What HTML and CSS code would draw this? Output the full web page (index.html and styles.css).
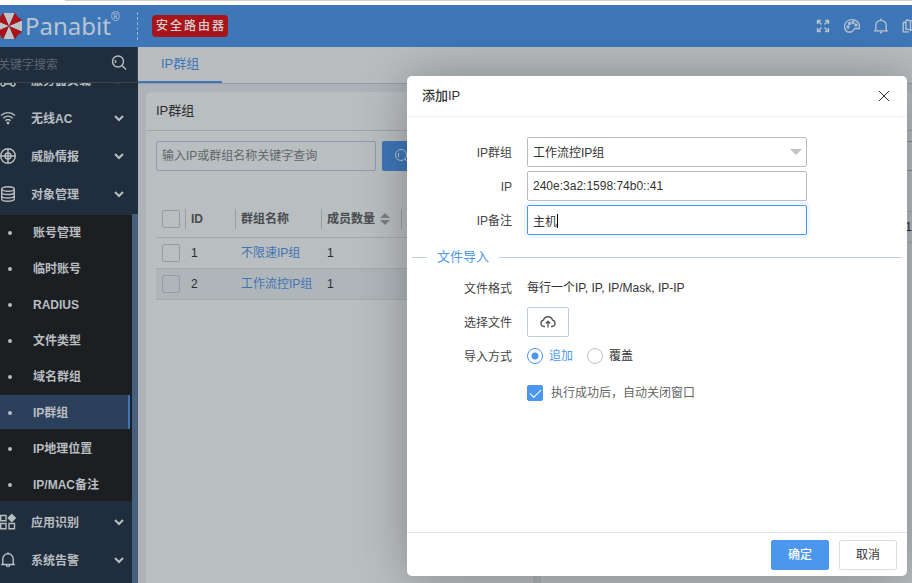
FILE: index.html
```html
<!DOCTYPE html>
<html lang="zh-CN">

<head>
    <meta charset="UTF-8">
    <meta name="viewport" content="width=device-width, initial-scale=1.0">
    <title>Panabit</title>
    <link rel="stylesheet" href="styles.css">
</head>

<body>
    <div class="app">
        <div class="strip"></div>

        <header class="topbar">
            <div class="brand">
                <svg class="brand-mark" viewBox="0 0 28 28">
                    <path fill="#bfc3c8" d="M14 14 8.200 1h11.600zM14 14 27 8.200v11.600zM14 14 8.200 27h11.600zM14 14 1 8.200v11.600z" />
                    <path fill="#a9141a" d="M14 14 19.800.5 23 5l4.500 3.200zM14 14 27.500 19.800 23 23l-3.200 4.500zM14 14 8.200 27.500 5 23 .5 19.800zM14 14 .5 8.200 5 5 8.200.5z" />
                </svg>
                <span class="brand-name">Panabit</span>
                <sup class="brand-reg">®</sup>
            </div>
            <span class="badge">安全路由器</span>
            <div class="tools">
                <button type="button" aria-label="全屏">
                    <svg viewBox="0 0 16 16"><path d="M2.500 6V2.500H6M2.500 2.500l4 4M10 2.500h3.500V6M13.500 2.500l-4 4M2.500 10v3.500H6M2.500 13.500l4-4M13.500 10v3.500H10M13.500 13.500l-4-4" /></svg>
                </button>
                <button type="button" aria-label="主题">
                    <svg viewBox="0 0 16 16"><path d="M3.500 14C.8 12.500.3 9.500.6 7.500 1.200 4 4.300 1.600 8 1.600c4.200 0 7.400 3 7.400 6.400v2.500h-4c-2.600 0-1.600 3.500-4.200 3.500z" /><circle cx="4" cy="9" r="1" /><circle cx="5.500" cy="5.500" r="1" /><circle cx="9" cy="4.500" r="1" /><circle cx="12" cy="7" r="1" /></svg>
                </button>
                <button type="button" aria-label="通知">
                    <svg viewBox="0 0 16 16"><path d="M.8 12.800h14.400M2.800 12.500V7.500a5.200 5.200 0 0 1 10.400 0v5M8 .5v1.800M6.800 14.500h2.400" /></svg>
                </button>
                <button type="button" aria-label="文档">
                    <svg viewBox="0 0 16 16"><path d="M4 11.500V2.500C5.500 1.500 7 2 8.500 3.500 10 2 12 1.500 14 2.500v9c-2-.8-4-.3-5.500 1-1.500-1.300-3-1.800-4.500-1zM8.500 3.500v9M4 4.500H1.200v9.300H7" /></svg>
                </button>
            </div>
        </header>

        <div class="layout">
            <aside class="sidebar">
                <div class="side-search">
                    <input type="text" placeholder="关键字搜索" aria-label="关键字搜索">
                    <button type="button" aria-label="搜索">
                        <svg viewBox="0 0 16 16"><circle cx="7" cy="6.500" r="5.500" /><path d="M4.500 8V5M11 10.500l4 4" /></svg>
                    </button>
                </div>
                <div class="side-scroll">
                    <ul class="menu">
                        <li>
                            <a class="menu-item" href="#">
                                <svg class="icon" viewBox="0 0 16 16"><path d="M8 3v4M3 10V7h10v3M5 12h6" /><circle cx="3" cy="12" r="2" /><circle cx="13" cy="12" r="2" /></svg>
                                <span>服务器负载</span>
                                <svg class="arrow" viewBox="0 0 10 10"><path d="M1 3l4 4 4-4" /></svg>
                            </a>
                        </li>
                        <li>
                            <a class="menu-item" href="#">
                                <svg class="icon" viewBox="0 0 16 16"><path d="M1 5.500c4-3.800 10-3.800 14 0M3.200 8.200c2.800-2.600 6.800-2.600 9.600 0M5.400 10.700c1.600-1.400 3.600-1.400 5.200 0" /><circle cx="8" cy="13" r=".7" /></svg>
                                <span>无线AC</span>
                                <svg class="arrow" viewBox="0 0 10 10"><path d="M1 3l4 4 4-4" /></svg>
                            </a>
                        </li>
                        <li>
                            <a class="menu-item" href="#">
                                <svg class="icon" viewBox="0 0 16 16"><circle cx="8" cy="8" r="7.300" /><circle cx="8" cy="8" r="3" /><path d="M8 1v14M1 8h14" /></svg>
                                <span>威胁情报</span>
                                <svg class="arrow" viewBox="0 0 10 10"><path d="M1 3l4 4 4-4" /></svg>
                            </a>
                        </li>
                        <li>
                            <a class="menu-item" href="#">
                                <svg class="icon" viewBox="0 0 16 16"><ellipse cx="8" cy="3" rx="6.300" ry="2.300" /><path d="M1.700 3v10c0 3 12.600 3 12.600 0V3M1.700 6.300c0 3 12.600 3 12.600 0M1.700 9.700c0 3 12.600 3 12.600 0" /></svg>
                                <span>对象管理</span>
                                <svg class="arrow" viewBox="0 0 10 10"><path d="M1 3l4 4 4-4" /></svg>
                            </a>
                            <ul class="submenu">
                                <li><a href="#">账号管理</a></li>
                                <li><a href="#">临时账号</a></li>
                                <li><a href="#">RADIUS</a></li>
                                <li><a href="#">文件类型</a></li>
                                <li><a href="#">域名群组</a></li>
                                <li><a class="active" href="#">IP群组</a></li>
                                <li><a href="#">IP地理位置</a></li>
                                <li><a href="#">IP/MAC备注</a></li>
                            </ul>
                        </li>
                        <li>
                            <a class="menu-item" href="#">
                                <svg class="icon" viewBox="0 0 16 16"><path d="M.7 1.500H6v5.200H.7zM.7 9.500H6v5.200H.7zM9 9.500h5.500v5.200H9z" /><path class="solid" d="M11.800.5 15.300 4l-3.500 3.500L8.300 4z" /></svg>
                                <span>应用识别</span>
                                <svg class="arrow" viewBox="0 0 10 10"><path d="M1 3l4 4 4-4" /></svg>
                            </a>
                        </li>
                        <li>
                            <a class="menu-item" href="#">
                                <svg class="icon" viewBox="0 0 16 16"><path d="M1 12.500h14M2.800 12.500V7a5.200 5.200 0 0 1 10.400 0v5.500M8 .3v1.500M6 13c.3 2 3.700 2 4 0" /></svg>
                                <span>系统告警</span>
                                <svg class="arrow" viewBox="0 0 10 10"><path d="M1 3l4 4 4-4" /></svg>
                            </a>
                        </li>
                    </ul>
                    <div class="side-track"></div>
                </div>
            </aside>

            <main class="main">
                <nav class="tabs">
                    <a class="tab active" href="#">IP群组</a>
                </nav>
                <div class="cards">
                    <section class="card">
                        <h2 class="card-title">IP群组</h2>
                        <div class="card-body">
                            <div class="filter">
                                <input type="text" placeholder="输入IP或群组名称关键字查询" aria-label="查询">
                                <button type="button" aria-label="查询">
                                    <svg viewBox="0 0 16 16"><circle cx="7" cy="7" r="5.500" /><path d="M4.500 9V5M11 11l4 4" /></svg>
                                </button>
                            </div>
                            <table class="grid">
                                <thead>
                                    <tr>
                                        <th class="col-check"><div class="th-cell"><input type="checkbox" aria-label="全选"></div></th>
                                        <th class="col-id"><div class="th-cell">ID</div></th>
                                        <th class="col-name"><div class="th-cell">群组名称</div></th>
                                        <th class="col-count">
                                            <div class="th-cell">成员数量
                                                <svg class="sort" viewBox="0 0 10 12"><path d="M5 0l5 5H0zM5 12 0 7h10z" /></svg>
                                            </div>
                                        </th>
                                        <th></th>
                                    </tr>
                                </thead>
                                <tbody>
                                    <tr>
                                        <td><input type="checkbox" aria-label="选择 1"></td>
                                        <td>1</td>
                                        <td><a href="#">不限速IP组</a></td>
                                        <td>1</td>
                                        <td></td>
                                    </tr>
                                    <tr class="current">
                                        <td><input type="checkbox" aria-label="选择 2"></td>
                                        <td>2</td>
                                        <td><a href="#">工作流控IP组</a></td>
                                        <td>1</td>
                                        <td></td>
                                    </tr>
                                </tbody>
                            </table>
                        </div>
                    </section>
                    <section class="card">
                        <h2 class="card-title"></h2>
                        <div class="detail-bar"></div>
                        <div class="detail-row">1</div>
                    </section>
                </div>
            </main>
        </div>
    </div>

    <div class="modal" role="dialog" aria-labelledby="modal-title">
        <div class="modal-head">
            <h3 id="modal-title">添加IP</h3>
            <button type="button" class="close" aria-label="关闭">
                <svg viewBox="0 0 12 12"><path d="M1 1l10 10M11 1 1 11" /></svg>
            </button>
        </div>
        <form class="modal-body">
            <div class="row">
                <label class="label" for="group">IP群组</label>
                <div class="field select">
                    <select id="group">
                        <option>工作流控IP组</option>
                    </select>
                </div>
            </div>
            <div class="row">
                <label class="label" for="ip">IP</label>
                <div class="field"><input type="text" id="ip" value="240e:3a2:1598:74b0::41"></div>
            </div>
            <div class="row">
                <label class="label" for="note">IP备注</label>
                <div class="field editing"><input type="text" id="note" value="主机"></div>
            </div>
            <h4 class="divider">文件导入</h4>
            <div class="row">
                <span class="label">文件格式</span>
                <span class="value">每行一个IP, IP, IP/Mask, IP-IP</span>
            </div>
            <div class="row">
                <label class="label" for="upload">选择文件</label>
                <button type="button" class="upload" id="upload">
                    <svg viewBox="0 0 16 16"><path d="M5 12.500H3.800a3.200 3.200 0 0 1-.4-6.300 4.800 4.800 0 0 1 9.200 0 3.200 3.200 0 0 1-.4 6.300H11M8 13.500V7.500M5.700 9.500 8 7.200l2.300 2.300" /></svg>
                </button>
            </div>
            <div class="row">
                <span class="label">导入方式</span>
                <label class="radio"><input type="radio" name="mode" checked><span>追加</span></label>
                <label class="radio"><input type="radio" name="mode"><span>覆盖</span></label>
            </div>
            <div class="row auto-close">
                <span class="label"></span>
                <label class="check"><input type="checkbox" checked><span>执行成功后，自动关闭窗口</span></label>
            </div>
        </form>
        <div class="modal-foot">
            <button type="button" class="btn primary">确定</button>
            <button type="button" class="btn">取消</button>
        </div>
    </div>
</body>

</html>
```
FILE: styles.css
```css
* {
    box-sizing: border-box;
}

body {
    margin: 0;
    font: 12px/18px "Liberation Sans", "Noto Sans CJK SC", sans-serif;
    color: #2a2d30;
    overflow: hidden;
}

ul {
    list-style: none;
    margin: 0;
    padding: 0;
}

a {
    color: inherit;
    text-decoration: none;
}

h2,
h3,
h4 {
    margin: 0;
    font-weight: normal;
}

button,
input,
select {
    font: inherit;
    color: inherit;
    margin: 0;
}

button {
    padding: 0;
    border: none;
    background: none;
    cursor: pointer;
}

svg {
    display: block;
    fill: none;
    stroke: currentColor;
}

.app {
    display: flex;
    flex-direction: column;
    height: 100vh;
    overflow: hidden;
}

.strip {
    flex: none;
    height: 5px;
    margin-left: 65px;
    border-top: 1px solid #cfcfcf;
}

/* top bar */
.topbar {
    flex: none;
    display: flex;
    align-items: center;
    height: 42px;
    background: #3e77b8;
    color: #b9c4d0;
    overflow: hidden;
}

.brand {
    display: flex;
    align-items: center;
    width: 138px;
    height: 28px;
    border-right: 1px dashed #9db4cf;
}

.brand-mark {
    flex: none;
    width: 28px;
    height: 28px;
    margin-left: -5px;
    stroke: none;
}

.brand-name {
    margin-left: 2px;
    font: 24px/28px "Noto Sans", "Open Sans", sans-serif;
}

.brand-reg {
    align-self: flex-start;
    font-size: 12px;
    line-height: 10px;
}

.badge {
    margin-left: 14px;
    padding: 2px 2px 2px 4px;
    border-radius: 4px;
    background: #a9141a;
    color: #d5cfcf;
    font-weight: 500;
    letter-spacing: 2px;
}

.tools {
    display: flex;
    gap: 13px;
    margin-left: auto;
    margin-right: -6px;
}

.tools svg {
    width: 16px;
    height: 16px;
    stroke-width: 1.3;
}

.layout {
    flex: 1;
    display: flex;
    min-height: 0;
}

/* sidebar */
.sidebar {
    flex: none;
    display: flex;
    flex-direction: column;
    width: 138px;
    background: #1f2d3d;
    color: #b9bdc1;
}

.side-search {
    flex: none;
    display: flex;
    align-items: center;
    height: 36px;
    padding-right: 10px;
    border-right: 1px solid #3a424b;
    border-bottom: 1px solid #3a424b;
}

.side-search input {
    flex: 1;
    min-width: 0;
    margin-left: -2px;
    padding: 0;
    border: none;
    outline: none;
    background: none;
}

.side-search input::placeholder {
    color: #5c6670;
}

.side-search svg {
    width: 16px;
    height: 16px;
    margin-bottom: 4px;
    stroke-width: 1.4;
}

.side-scroll {
    flex: 1;
    display: flex;
    min-height: 0;
    overflow: hidden;
}

/* list is scrolled down by part of one item */
.menu {
    flex: 1;
    margin-top: -22px;
    font-weight: bold;
}

.menu-item {
    display: flex;
    align-items: center;
    height: 38px;
    padding-right: 8px;
}

.menu-item span {
    padding-top: 2px;
}

.menu-item .icon {
    width: 16px;
    height: 16px;
    margin-right: 15px;
    stroke-width: 1.4;
}

.menu-item .arrow {
    width: 10px;
    height: 10px;
    margin-left: auto;
    stroke-width: 2;
}

.icon .solid {
    fill: currentColor;
}

.submenu {
    display: flex;
    flex-direction: column;
    gap: 2px;
    margin: 2px 0;
    background: #1b1f22;
}

.submenu a {
    display: flex;
    align-items: center;
    height: 34px;
    margin-right: 2px;
    padding: 2px 0 0 8px;
}

.submenu a::before {
    content: "";
    width: 4px;
    height: 4px;
    margin-right: 21px;
    border-radius: 2px;
    background: #b9bdc1;
}

.submenu a.active {
    background: #2b405b;
    border-right: 2px solid #3e77b8;
}

.side-track {
    width: 6px;
    margin-top: 131px;
    background: #465f7c;
}

/* main area */
.main {
    flex: 1;
    display: flex;
    flex-direction: column;
    min-width: 0;
    background: #adb3b8;
}

.tabs {
    flex: none;
    display: flex;
    height: 37px;
    background: #b9bdbf;
    border-bottom: 1px solid #929da8;
}

.tab {
    padding: 8px 23px;
    font-size: 13px;
    color: #3e77b8;
}

.tab.active {
    border-bottom: 2px solid #3e77b8;
}

.cards {
    flex: 1;
    display: grid;
    grid-template-columns: 51fr 49fr;
    gap: 8px;
    padding: 8px 0 0 8px;
}

.card {
    min-width: 0;
    border-radius: 5px 5px 0 0;
    background: #b9bec0;
    overflow: hidden;
}

.card-title {
    height: 39px;
    padding: 10px;
    font-size: 13px;
    border-bottom: 1px solid #9fa5a9;
}

.card-body {
    padding: 10px;
}

.filter {
    display: flex;
    gap: 6px;
    margin-bottom: 30px;
}

.filter input {
    width: 220px;
    height: 30px;
    padding: 0 5px;
    border: 1px solid #8c9cb2;
    border-radius: 2px;
    background: none;
}

.filter input::placeholder {
    color: #626669;
}

.filter button {
    width: 60px;
    height: 30px;
    padding-left: 12px;
    border-radius: 2px;
    background: #3e77b8;
    color: #b9c4d0;
}

.filter svg {
    width: 16px;
    height: 16px;
}

.grid {
    width: 100%;
    table-layout: fixed;
    border-spacing: 0;
}

.grid th,
.grid td {
    padding: 0;
    text-align: left;
    border-bottom: 1px solid #a4a9ab;
}

.grid th {
    height: 37px;
    color: #484c4f;
}

.grid td {
    height: 31px;
    padding-left: 6px;
}

.grid td a {
    color: #4373b5;
}

.grid .current {
    background: #afb6b9;
}

.col-check {
    width: 30px;
}

.col-id {
    width: 50px;
}

.col-name {
    width: 86px;
}

.col-count {
    width: 80px;
}

.th-cell {
    display: flex;
    align-items: center;
    height: 20px;
    padding-left: 5px;
    border-right: 1px solid #9a9ea1;
}

.col-check .th-cell {
    padding-left: 6px;
}

.sort {
    width: 10px;
    height: 12px;
    margin-left: 5px;
    fill: #7c8083;
    stroke: none;
}

.grid td + td {
    padding-left: 5px;
}

input[type="checkbox"] {
    appearance: none;
    display: block;
    flex: none;
    width: 18px;
    height: 18px;
    border: 1px solid #979b9e;
    border-radius: 2px;
}

.detail-bar {
    height: 30px;
    margin: 10px 0 40px;
    border: 1px solid #8593a5;
    border-width: 1px 0;
}

.detail-row {
    padding: 6px 0;
    text-align: right;
    border: 1px solid #a4a9ab;
    border-width: 1px 0;
}

/* dialog */
.modal {
    position: absolute;
    top: 76px;
    right: 5px;
    display: flex;
    flex-direction: column;
    width: 500px;
    min-height: 500px;
    border-radius: 5px;
    background: #fff;
    color: #333;
    box-shadow: 1px 1px 50px rgba(0, 0, 0, .3);
}

.modal-head {
    display: flex;
    align-items: center;
    justify-content: space-between;
    height: 41px;
    padding: 0 17px 0 15px;
    border-bottom: 1px solid #eee;
}

.modal-head h3 {
    font-size: 13px;
    font-weight: 500;
}

.close svg {
    width: 12px;
    height: 12px;
}

.modal-body {
    flex: 1;
    display: flex;
    flex-direction: column;
    gap: 4px;
    padding: 20px 5px;
}

.row {
    display: flex;
    align-items: center;
    height: 30px;
}

.label {
    width: 100px;
    margin-right: 15px;
    padding-top: 2px;
    text-align: right;
    color: #444;
}

.field {
    position: relative;
    width: 280px;
}

.field input,
.field select {
    display: block;
    width: 100%;
    height: 30px;
    padding: 0 5px;
    border: 1px solid #b8bbc2;
    border-radius: 2px;
    outline: none;
    background: #fff;
}

.field select {
    appearance: none;
    padding-top: 2px;
}

.select::after {
    content: "";
    position: absolute;
    top: 12px;
    right: 5px;
    border: 6px solid transparent;
    border-top-color: #c2c2c2;
    border-bottom: none;
}

.editing input {
    border-color: #4c97ee;
    box-shadow: 0 0 0 3px #f0f6fe;
    caret-color: transparent;
}

/* text cursor */
.editing::after {
    content: "";
    position: absolute;
    top: 9px;
    left: 30px;
    width: 1px;
    height: 14px;
    background: #000;
}

.divider {
    display: flex;
    align-items: center;
    gap: 10px;
    height: 30px;
    padding-top: 6px;
    font-size: 13px;
    color: #4c97ee;
}

.divider::before,
.divider::after {
    content: "";
    width: 15px;
    height: 1px;
    background: #c3cfe0;
}

.divider::after {
    flex: 1;
}

.upload {
    display: flex;
    align-items: center;
    justify-content: center;
    width: 42px;
    height: 30px;
    border: 1px solid #bccde5;
    border-radius: 2px;
    color: #555;
}

.upload svg {
    width: 16px;
    height: 16px;
    stroke-width: 1.3;
}

.radio,
.check {
    display: flex;
    align-items: center;
}

.radio {
    gap: 6px;
    margin-right: 14px;
}

.radio input {
    appearance: none;
    width: 16px;
    height: 16px;
    border: 1px solid #c2c2c2;
    border-radius: 50%;
}

.radio input:checked {
    border-color: #4c97ee;
    background: radial-gradient(circle, #4c97ee 3px, #fff 4px);
}

.radio input:checked + span {
    color: #4c97ee;
}

.auto-close {
    padding-top: 6px;
}

.check {
    gap: 8px;
    color: #666;
}

.check input {
    display: grid;
    place-items: center;
    width: 16px;
    height: 16px;
    border-color: #4c97ee;
    background: #4c97ee;
}

.check input::before {
    content: "";
    width: 10px;
    height: 5px;
    margin-bottom: 3px;
    border: 1px solid #fff;
    border-width: 0 0 1px 1px;
    transform: rotate(-45deg);
}

.modal-foot {
    display: flex;
    justify-content: flex-end;
    gap: 10px;
    padding: 7px 10px 6px;
    border-top: 1px solid #e4e4e4;
}

.btn {
    width: 58px;
    height: 30px;
    border: 1px solid #dcdcdc;
    border-radius: 2px;
}

.btn.primary {
    border-color: #4c97ee;
    background: #4c97ee;
    color: #fff;
    font-weight: 500;
}
```
